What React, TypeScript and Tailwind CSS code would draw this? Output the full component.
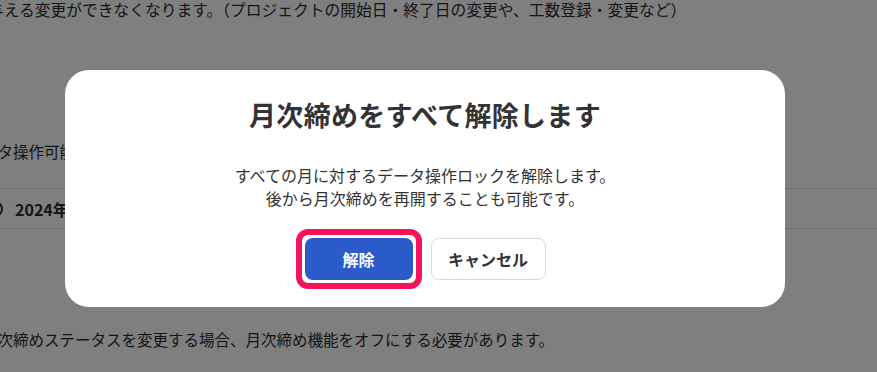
export default function App() {
  return (
    <div className="relative w-[877px] h-[372px] overflow-hidden bg-white font-['Noto_Sans_CJK_JP',sans-serif] text-[#2a2a2a]">
      {/* page behind the dialog */}
      <div className="-ml-[18px] text-[15.5px] whitespace-nowrap">
        <p className="pl-[6px] leading-5 text-[15.75px]">
          与える変更ができなくなります。（プロジェクトの開始日・終了日の変更や、工数登録・変更など）
        </p>
        <p className="mt-[121px] leading-5">ータ操作可能な期間</p>
        <div className="mt-[27px] h-[41px] border-y border-[#dddddd] flex items-center gap-3 pl-[5px]">
          <span className="w-4 h-4 rounded-full border-2 border-[#333]" />
          <span className="font-bold text-[16px]">2024年4月</span>
        </div>
        <p className="mt-[100px] leading-5">
          月次締めステータスを変更する場合、月次締め機能をオフにする必要があります。
        </p>
      </div>

      {/* overlay + dialog */}
      <div className="absolute inset-0 bg-black/50 pl-[65px] pt-[70px]">
        <div className="w-[720px] h-[237px] bg-white rounded-3xl flex flex-col items-center pt-[27px] text-[#333]">
          <h2 className="text-[27px] leading-9 font-bold tracking-[0.3px]">月次締めをすべて解除します</h2>
          <div className="mt-[31px] text-[16px] leading-[23px] text-center">
            <p>すべての月に対するデータ操作ロックを解除します。</p>
            <p>後から月次締めを再開することも可能です。</p>
          </div>
          <div className="mt-[28px] flex items-center gap-[18px]">
            <div className="relative">
              <button className="w-[108px] h-[42px] rounded-lg bg-[#2b5bcb] text-white text-[16px] font-bold">
                解除
              </button>
              {/* highlight annotation */}
              <div className="absolute -inset-[9px] border-[6px] border-[#f5145c] rounded-[12px] pointer-events-none" />
            </div>
            <button className="w-[115px] h-[42px] rounded-lg border border-[#d9d9d9] bg-white text-[16px] font-bold text-[#333]">
              キャンセル
            </button>
          </div>
        </div>
      </div>
    </div>
  );
}
